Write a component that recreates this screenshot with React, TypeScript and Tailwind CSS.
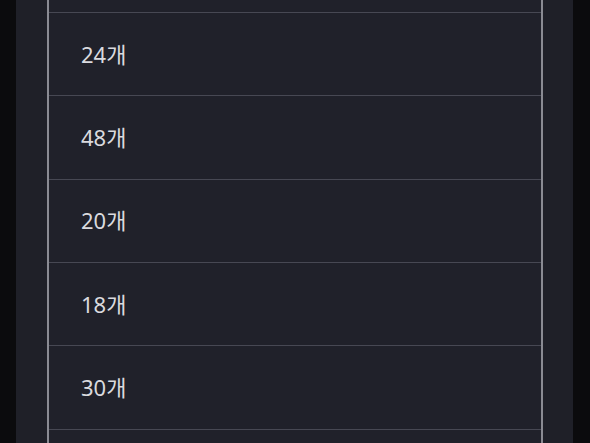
import React from "react";

const counts = ["12", "24", "48", "20", "18", "30", "36"];

function App() {
  return (
    <div
      className="flex w-[590px] h-[443px] overflow-hidden bg-[#0b0b0d]"
      style={{ fontFamily: '"Noto Sans", "Noto Sans CJK KR", sans-serif' }}
    >
      <div className="ml-[16px] w-[557px] h-full bg-[#1f2028] pl-[31px] pr-[30px] overflow-hidden">
        <div className="mt-[-70.5px] border-x-2 border-[#8a8b93] bg-[#20212a]">
          {counts.map((c) => (
            <div
              key={c}
              className="h-[83.4px] flex items-center pl-[32px] border-b-[1.5px] border-[#474853] text-[22px] text-[#dadadf]"
            >
              {c}개
            </div>
          ))}
        </div>
      </div>
    </div>
  );
}

export default App;
